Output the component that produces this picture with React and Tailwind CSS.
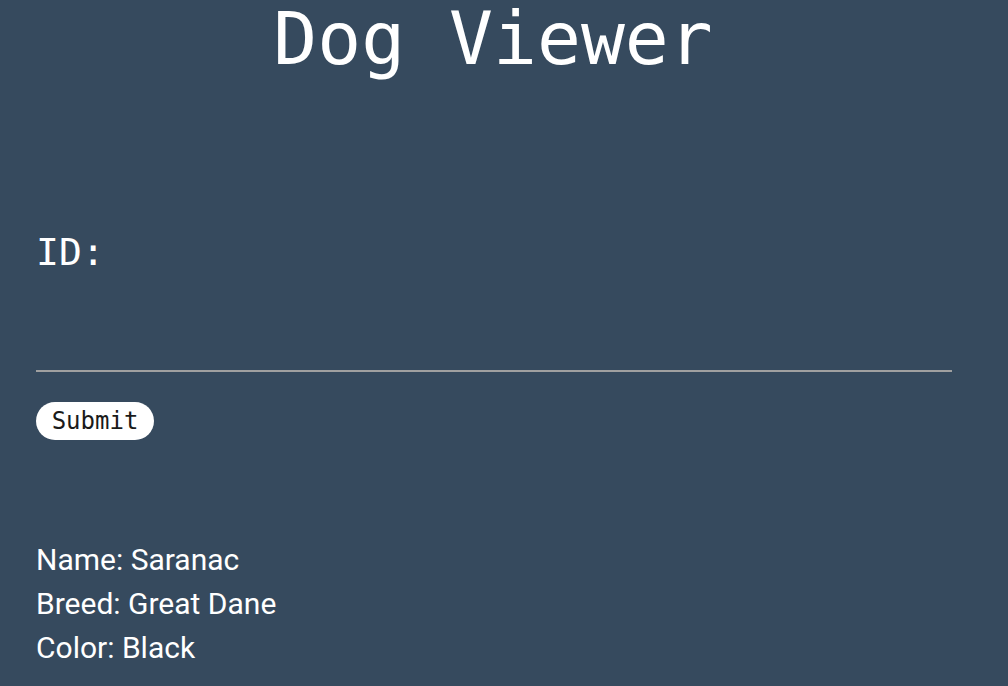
export default function App() {
  return (
    <div className="min-h-[686px] bg-[#364a5e] text-white overflow-hidden">
      {/* Title */}
      <h1 className="pr-[22px] text-center font-['DejaVu_Sans_Mono',monospace] text-[73px] leading-[78px]">
        Dog Viewer
      </h1>

      <div className="px-[36px]">
        {/* ID field */}
        <div className="mt-[152px] font-['DejaVu_Sans_Mono',monospace] text-[38px] leading-[44px]">ID:</div>
        <div className="mt-[96px] h-[2px] w-[916px] bg-[#a0a0a0]" />

        <button className="mt-[30px] h-[38px] w-[118px] rounded-[19px] bg-white font-['DejaVu_Sans_Mono',monospace] text-[24px] text-[#1a1a1a]">
          Submit
        </button>

        {/* Dog details */}
        <div className="mt-[98px] font-['Roboto',sans-serif] text-[30px] leading-[44px]">
          <div>Name: Saranac</div>
          <div>Breed: Great Dane</div>
          <div>Color: Black</div>
        </div>
      </div>
    </div>
  )
}
